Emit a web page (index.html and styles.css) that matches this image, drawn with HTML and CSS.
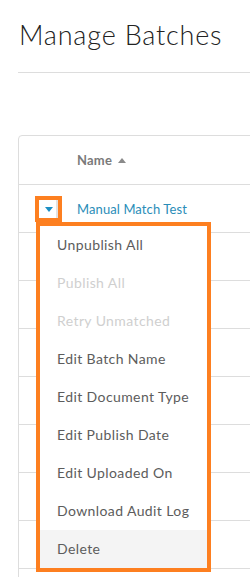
FILE: index.html
```html
<!DOCTYPE html>
<html lang="en">
<head>
  <meta charset="UTF-8" />
  <meta name="viewport" content="width=device-width, initial-scale=1" />
  <title>Manage Batches</title>
  <link rel="stylesheet" href="styles.css">
</head>
<body>

<div class="page">
  <h1 class="page-title">Manage Batches</h1>
  <hr class="divider">

  <div class="card">
    <div class="row head">
      <div class="cell-toggle"></div>
      <div class="cell-name">Name
        <svg class="sort" width="8" height="5" viewBox="0 0 8 5"><path d="M4 0l4 5H0z" fill="#8a8a8a"/></svg>
      </div>
    </div>

    <div class="row">
      <div class="cell-toggle">
        <button class="toggle" aria-label="Actions">
          <svg width="8" height="5" viewBox="0 0 8 5"><path d="M0 0h8L4 5z" fill="#1b8fc4"/></svg>
        </button>
      </div>
      <div class="cell-name"><a href="#" class="batch-link">Manual Match Test</a></div>
    </div>

    <div class="row"></div>
    <div class="row"></div>
    <div class="row"></div>
    <div class="row"></div>
    <div class="row"></div>
    <div class="row"></div>
    <div class="row"></div>
    <div class="row"></div>

    <ul class="menu">
      <li>Unpublish All</li>
      <li class="disabled">Publish All</li>
      <li class="disabled">Retry Unmatched</li>
      <li>Edit Batch Name</li>
      <li>Edit Document Type</li>
      <li>Edit Publish Date</li>
      <li>Edit Uploaded On</li>
      <li>Download Audit Log</li>
      <li class="hover">Delete</li>
    </ul>
  </div>
</div>

</body>
</html>
```

FILE: styles.css
```css
* { box-sizing: border-box; margin: 0; padding: 0; }
body {
  font-family: 'Lato', 'Noto Sans', sans-serif;
  background: #fff;
  color: #333;
  overflow: hidden;
}

.page {
  padding: 18px 0 0 18px;
  width: 250px;
}

.page-title {
  font-size: 27px;
  font-weight: 300;
  letter-spacing: 0.8px;
  color: #222;
  line-height: 34px;
  margin-left: 1px;
}

.divider {
  border: none;
  border-top: 1px solid #ddd;
  margin-top: 20px;
  width: 400px;
}

.card {
  position: relative;
  margin-top: 62px;
  width: 400px;
  border: 1px solid #ddd;
  border-radius: 4px;
}

.row {
  display: flex;
  align-items: center;
  height: 48px;
  border-bottom: 1px solid #ddd;
}
.row.head { height: 49px; }

.cell-toggle {
  width: 58px;
  padding-left: 16px;
}

.cell-name {
  font-size: 13px;
}

.head .cell-name {
  font-size: 13px;
  font-weight: 700;
  letter-spacing: 0.2px;
  color: #7a7a7a;
}

.sort {
  margin-left: 3px;
  vertical-align: 2px;
}

.batch-link {
  color: #2a8db8;
  text-decoration: none;
  letter-spacing: 0.1px;
}

.toggle {
  display: flex;
  align-items: center;
  justify-content: center;
  width: 27px;
  height: 26px;
  border: 4px solid #fd7f20;
  background: #fff;
  box-shadow: inset -2px 0 0 #e2e2e2;
  cursor: pointer;
  margin-top: 1px;
}

.menu {
  position: absolute;
  left: 17px;
  top: 86px;
  width: 175px;
  border: 4px solid #fd7f20;
  background: #fff;
  list-style: none;
}

.menu li {
  height: 38px;
  line-height: 38px;
  padding-left: 17px;
  font-size: 14px;
  letter-spacing: 0.4px;
  color: #5c5c5c;
}
.menu li.disabled { color: #cfcfcf; }
.menu li.hover { background: #f4f4f4; }
```
